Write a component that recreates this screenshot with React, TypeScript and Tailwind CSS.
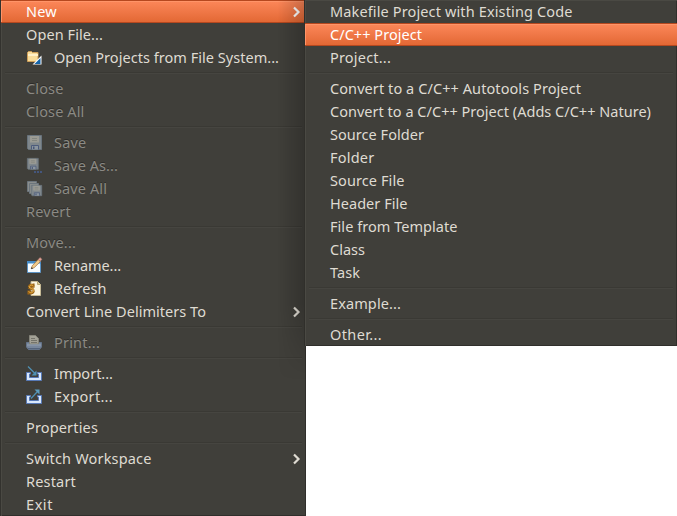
import { useLayoutEffect, useRef, useState, type ReactNode } from "react";

type Entry =
  | "separator"
  | {
      label: string;
      width: number;
      icon?: ReactNode;
      disabled?: boolean;
      active?: boolean;
      submenu?: boolean;
    };

function Icon({ children }: { children: ReactNode }) {
  return (
    <svg width="16" height="16" viewBox="0 0 16 16" className="block shrink-0 overflow-visible">
      {children}
    </svg>
  );
}

const folder = (
  <Icon>
    <path d="M1.5 11.5v-9l1-1h3l1 1h5.5v9z" fill="#f8dc9a" stroke="#cf9f58" />
    <path d="M2 4h10v2H2z" fill="#fff0c8" />
    <path d="M15.5 5.5v9H6.5z" fill="#fff" />
    <path d="M14.5 8v6H8.5z" fill="#1464a8" />
  </Icon>
);

const floppyShape = (
  <>
    <path d="M.5.5h14v14h-13l-1-1z" fill="#7f878c" stroke="#68737c" />
    <path d="M3 1h9v6.5H3z" fill="#9b9b94" />
    <path d="M5 3.5h5M5 5.5h5" stroke="#83867f" />
    <path d="M4.5 14.5v-4h7v4" fill="#8b959e" stroke="#4d5c7c" />
    <path d="M6 11.5h1.5V14H6z" fill="#4a5878" />
  </>
);

const save = (
  <Icon>
    <g transform="translate(1 0)">{floppyShape}</g>
  </Icon>
);

const saveAs = (
  <Icon>
    <g transform="translate(1 0) scale(.78)">{floppyShape}</g>
    <path d="M8 14h2M11 14h2M14 14h2" stroke="#465f94" strokeWidth="1.5" />
  </Icon>
);

const saveAll = (
  <Icon>
    <path d="M1.5 10.5v-10h9v3h-6v7z" fill="#8a8e8d" stroke="#6c757c" />
    <path d="M3.5 12.5v-10h9v3h-6v7z" fill="#8a8e8d" stroke="#6c757c" />
    <g transform="translate(5 4) scale(.74)">{floppyShape}</g>
  </Icon>
);

const rename = (
  <Icon>
    <path d="M1.5 3.5h13v11h-13z" fill="#f8fcff" stroke="#5c93c4" />
    <path d="M1 3h14v3H1z" fill="#458bc7" />
    <path d="M2 5.5h12" stroke="#9bc8eb" />
    <path d="M5.2 10.8l1-3 6-6.3 2.2 2-6.3 6.3z" fill="#f2cb8b" stroke="#9d713d" strokeWidth=".7" />
    <path d="M12.2 1.5L14-.5 16 1.3l-1.8 2z" fill="#e3a299" stroke="#a87468" strokeWidth=".5" />
    <path d="M5 11l.7-2 1.4 1.4z" fill="#333" />
  </Icon>
);

const refresh = (
  <Icon>
    <path d="M5 .5h6.5l3 3v11H5z" fill="#fbf5e0" stroke="#c6ba96" />
    <path d="M11.5.5v3h3" fill="#dbc98f" stroke="#b8a878" />
    <path d="M8 5.5C7 3 3.5 3 2.8 6M7.5 2.5v3.3H4.5M2.5 6.5c1 2 4.500 0 5.200 3M7.800 9.500c-.5 3.500-4 3.500-5.300 1.500M2.500 13.500V10.500h3" fill="none" stroke="#9c6415" strokeWidth="2.1" />
    <path d="M7.500 5.300C6.500 3.500 4 3.500 3 6c1 1.500 4 1 4.700 3.300-.7 3-3.700 3-5 1.200" fill="none" stroke="#efb548" strokeWidth="1" />
  </Icon>
);

const print = (
  <Icon>
    <path d="M.5 7.500h15v4.500l-2 2.500h-11l-2-2.500z" fill="#78879c" stroke="#65748a" />
    <path d="M3.500 9V.5h6l3 3V9z" fill="#a3a196" stroke="#85847a" />
    <path d="M5 3.500h4M5 5.500h6M5 7.500h6" stroke="#74736a" />
    <path d="M1 10h14" stroke="#93a0b1" />
    <path d="M2 13.500h12" stroke="#55647c" />
  </Icon>
);

const tray = (
  <>
    <path d="M.5 6.500h4v1.500h-1v3.500h9V8h-1V6.500h4v8H.5z" fill="#d9e8fc" stroke="#5779b6" />
  </>
);

const importIcon = (
  <Icon>
    {tray}
    <path d="M2 .5l7 7" stroke="#4e91b4" strokeWidth="1.2" />
    <path d="M10.500 4.500v5h-5z" fill="#4e91b4" />
  </Icon>
);

const exportIcon = (
  <Icon>
    {tray}
    <path d="M5 9.500l6.500-7" stroke="#4e91b4" strokeWidth="1.2" />
    <path d="M8.500.5h5v5z" fill="#5a9cbd" />
  </Icon>
);

const fileMenu: Entry[] = [
  { label: "New", width: 31, active: true, submenu: true },
  { label: "Open File...", width: 77 },
  { label: "Open Projects from File System...", width: 225, icon: folder },
  "separator",
  { label: "Close", width: 37.5, disabled: true },
  { label: "Close All", width: 58.5, disabled: true },
  "separator",
  { label: "Save", width: 32.5, icon: save, disabled: true },
  { label: "Save As...", width: 64, icon: saveAs, disabled: true },
  { label: "Save All", width: 53, icon: saveAll, disabled: true },
  { label: "Revert", width: 45, disabled: true },
  "separator",
  { label: "Move...", width: 50, disabled: true },
  { label: "Rename...", width: 67, icon: rename },
  { label: "Refresh", width: 52.5, icon: refresh },
  { label: "Convert Line Delimiters To", width: 180, submenu: true },
  "separator",
  { label: "Print...", width: 46, icon: print, disabled: true },
  "separator",
  { label: "Import...", width: 59, icon: importIcon },
  { label: "Export...", width: 59, icon: exportIcon },
  "separator",
  { label: "Properties", width: 72 },
  "separator",
  { label: "Switch Workspace", width: 125.5, submenu: true },
  { label: "Restart", width: 50 },
  { label: "Exit", width: 27 },
];

const newMenu: Entry[] = [
  { label: "Makefile Project with Existing Code", width: 242.5 },
  { label: "C/C++ Project", width: 92, active: true },
  { label: "Project...", width: 61 },
  "separator",
  { label: "Convert to a C/C++ Autotools Project", width: 251 },
  { label: "Convert to a C/C++ Project (Adds C/C++ Nature)", width: 321 },
  { label: "Source Folder", width: 94 },
  { label: "Folder", width: 44.5 },
  { label: "Source File", width: 74.5 },
  { label: "Header File", width: 77.5 },
  { label: "File from Template", width: 127.5 },
  { label: "Class", width: 35 },
  { label: "Task", width: 30 },
  "separator",
  { label: "Example...", width: 71 },
  "separator",
  { label: "Other...", width: 52 },
];

function Label({ text, width }: { text: string; width: number }) {
  const ref = useRef<HTMLSpanElement>(null);
  const [spacing, setSpacing] = useState(0);
  useLayoutEffect(() => {
    if (ref.current) {
      setSpacing((width - ref.current.getBoundingClientRect().width) / text.length);
    }
  }, [text, width]);
  return (
    <span ref={ref} className="whitespace-pre" style={{ letterSpacing: spacing }}>
      {text}
    </span>
  );
}

function Row({ entry }: { entry: Entry }) {
  if (entry === "separator") {
    return (
      <div className="h-2 px-1 pt-[3px]">
        <div className="h-0.5 border-t border-b border-t-[#3a3934] border-b-[#464540]" />
      </div>
    );
  }
  const tone = entry.active
    ? "border-[#b6481f] bg-linear-to-b from-[#fc8759] to-[#e36834] text-white shadow-[inset_1px_1px_0_#ff9468]"
    : entry.disabled
      ? "border-transparent text-[#8b8a84] [text-shadow:0_-1px_0_#2d2c29]"
      : "border-transparent text-[#dfdbd2]";
  return (
    <div className={`flex h-[23px] items-center gap-3 border-y pr-[5px] pl-[25px] ${tone}`}>
      {entry.icon}
      <Label text={entry.label} width={entry.width} />
      {entry.submenu && (
        <svg width="8" height="12" viewBox="0 0 8 12" className="ml-auto">
          <path d="M1 1.500l4.500 4.500L1 10.500" fill="none" stroke="currentColor" strokeWidth="2.200" />
        </svg>
      )}
    </div>
  );
}

export default function App() {
  return (
    <div className="flex h-[516px] w-[677px] items-start overflow-hidden bg-white font-['Noto_Sans','Open_Sans',sans-serif] text-[14.5px] leading-[21px]">
      <div className="relative h-[516px] w-[306px] shrink-0 border-l border-[#33322e] bg-[#403f3a] shadow-[inset_1px_0_0_#4a4943,inset_-1px_-1px_0_#302f2b]">
        {fileMenu.map((entry, i) => (
          <Row key={i} entry={entry} />
        ))}
        <div className="pointer-events-none absolute top-0 right-0 h-[380px] w-7 bg-linear-to-r from-transparent to-black/20 mask-b-from-80% mask-b-to-100%" />
      </div>
      <div className="relative -ml-0.5 h-[346px] w-[373px] shrink-0 border-l border-[#302f2b] bg-[#403f3a] shadow-[inset_1px_1px_0_#4a4943,inset_-1px_-1px_0_#302f2b]">
        {newMenu.map((entry, i) => (
          <Row key={i} entry={entry} />
        ))}
      </div>
    </div>
  );
}
